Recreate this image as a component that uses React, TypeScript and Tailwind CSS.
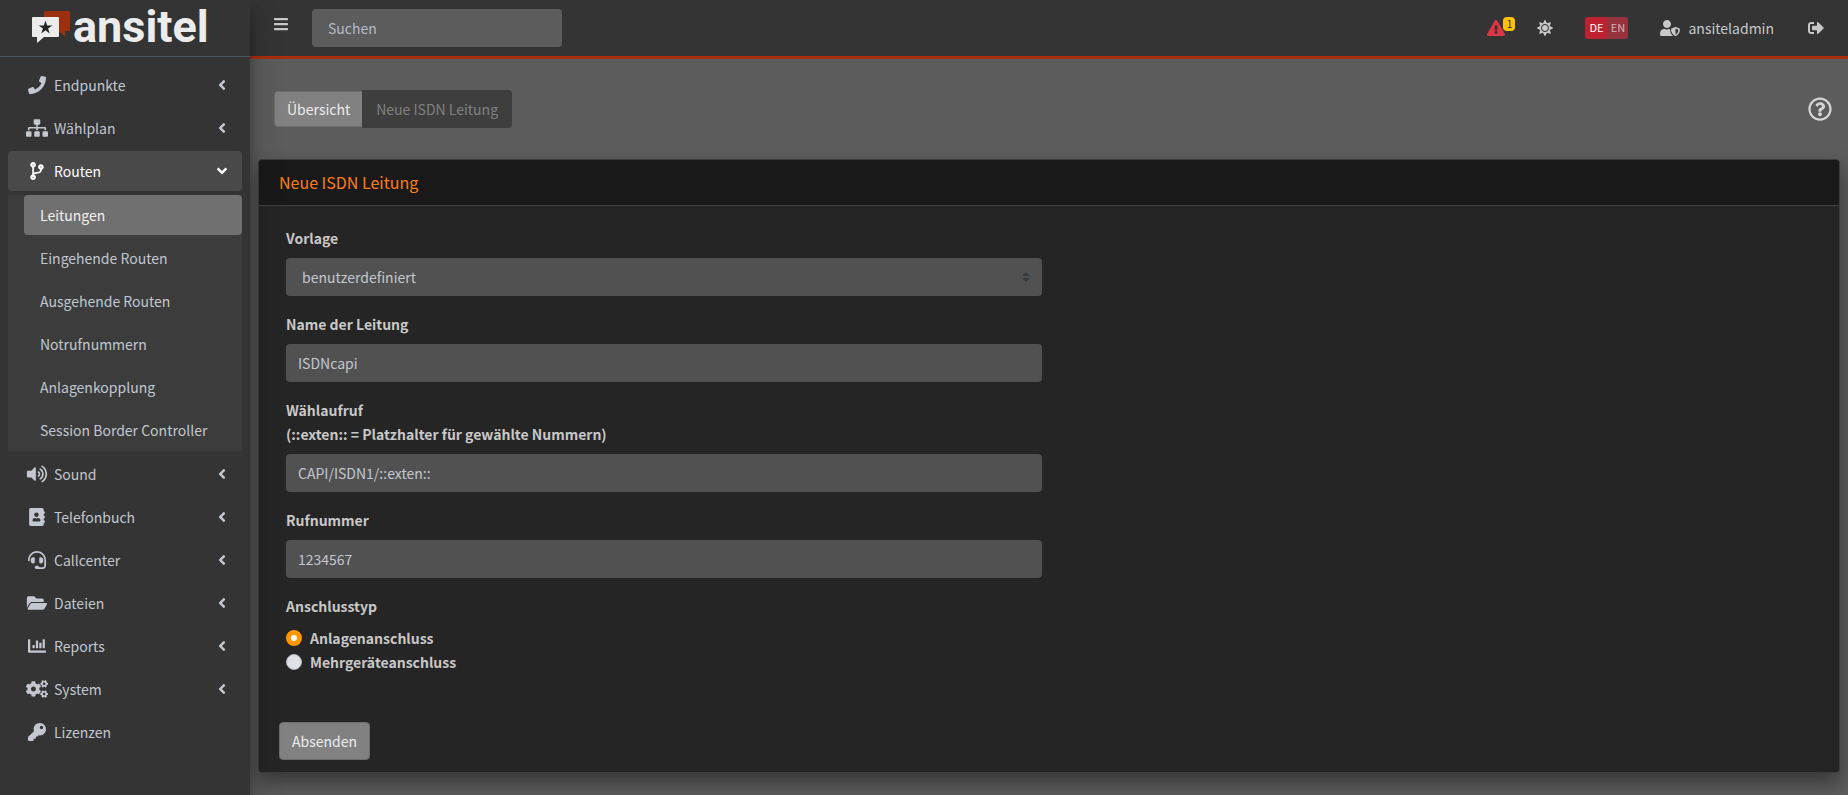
import { useState } from 'react';
import type { IconType } from 'react-icons';
import {
  FaAddressBook,
  FaAngleDown,
  FaAngleLeft,
  FaBars,
  FaChartBar,
  FaCodeBranch,
  FaCogs,
  FaExclamationTriangle,
  FaFolderOpen,
  FaHeadset,
  FaKey,
  FaPhone,
  FaRegQuestionCircle,
  FaSignOutAlt,
  FaSitemap,
  FaSun,
  FaUserShield,
  FaVolumeUp,
} from 'react-icons/fa';

interface NavEntry {
  label: string;
  icon: IconType;
  leaf?: boolean;
  children?: string[];
}

const NAV: NavEntry[] = [
  { label: 'Endpunkte', icon: FaPhone },
  { label: 'Wählplan', icon: FaSitemap },
  {
    label: 'Routen',
    icon: FaCodeBranch,
    children: [
      'Leitungen',
      'Eingehende Routen',
      'Ausgehende Routen',
      'Notrufnummern',
      'Anlagenkopplung',
      'Session Border Controller',
    ],
  },
  { label: 'Sound', icon: FaVolumeUp },
  { label: 'Telefonbuch', icon: FaAddressBook },
  { label: 'Callcenter', icon: FaHeadset },
  { label: 'Dateien', icon: FaFolderOpen },
  { label: 'Reports', icon: FaChartBar },
  { label: 'System', icon: FaCogs },
  { label: 'Lizenzen', icon: FaKey, leaf: true },
];

const fieldClass =
  'block h-[38px] w-full rounded bg-[#515151] px-3 text-[#c2c7d0] focus:outline-none focus:ring-1 focus:ring-orange-500';

function Logo() {
  return (
    <a href="#" className="flex h-[57px] items-center gap-[3px] border-b border-[#4b545c] pb-[3px] pl-8 text-[#ececec]">
      <svg viewBox="0 0 38 32" className="h-8 w-[38px] shrink-0" aria-hidden="true">
        <path d="M13 0h24a1 1 0 0 1 1 1v18a1 1 0 0 1-1 1h-4v6l-6-6H13a1 1 0 0 1-1-1V1a1 1 0 0 1 1-1z" fill="#9c2f0e" />
        <path d="M1 6h25a1 1 0 0 1 1 1v18a1 1 0 0 1-1 1H12l-7 6v-6H1a1 1 0 0 1-1-1V7a1 1 0 0 1 1-1z" fill="#ececec" />
        <path
          d="M13.5 9.5l1.6 4.9h5.2l-4.2 3 1.6 5-4.2-3.1-4.2 3.1 1.6-5-4.2-3h5.2z"
          fill="#222"
        />
      </svg>
      <span className="font-[Roboto,sans-serif] text-[45px] leading-[53px] font-bold">ansitel</span>
    </a>
  );
}

function NavItem({ entry }: { entry: NavEntry }) {
  const [open, setOpen] = useState(Boolean(entry.children));
  const Icon = entry.icon;
  const Arrow = open ? FaAngleDown : FaAngleLeft;

  return (
    <li>
      <button
        type="button"
        onClick={() => entry.children && setOpen(!open)}
        className={`flex h-10 w-full items-center rounded pr-3 pl-4 text-left ${
          entry.children ? 'bg-[#494949] text-white' : 'text-[#c2c7d0]'
        }`}
      >
        <span className="flex w-[26px] shrink-0 justify-center">
          <Icon className="h-[18px] w-[22px]" />
        </span>
        <span className="ml-1 flex-1">{entry.label}</span>
        {!entry.leaf && <Arrow className="size-4" />}
      </button>
      {entry.children && open && (
        <ul className="mt-1 flex flex-col gap-[3px] bg-[#3c3c3c] pb-px pl-4">
          {entry.children.map((child, i) => (
            <li key={child}>
              <a
                href="#"
                className={`flex h-10 items-center rounded px-4 whitespace-nowrap ${
                  i === 0 ? 'bg-[#707070] text-[#f1f1f1]' : 'text-[#c2c7d0]'
                }`}
              >
                {child}
              </a>
            </li>
          ))}
        </ul>
      )}
    </li>
  );
}

function Sidebar() {
  return (
    <aside className="z-10 w-[250px] shrink-0 bg-[#343434] shadow-[0_14px_28px_rgba(0,0,0,0.25),0_10px_10px_rgba(0,0,0,0.22)]">
      <Logo />
      <nav className="px-2 pt-2">
        <ul className="flex flex-col gap-[3px]">
          {NAV.map((entry) => (
            <NavItem key={entry.label} entry={entry} />
          ))}
        </ul>
      </nav>
    </aside>
  );
}

function Topbar() {
  return (
    <header className="flex h-[59px] items-center border-b-[3px] border-[#a92f0c] bg-[#343434] px-6 text-[#c8c8c8]">
      <button type="button" aria-label="Menü" className="mb-2">
        <FaBars className="h-4 w-[14px]" />
      </button>
      <input
        type="search"
        aria-label="Suchen"
        placeholder="Suchen"
        className="ml-6 h-[38px] w-[250px] rounded bg-[#5c5c5c] px-4 text-[#c2c7d0] placeholder:text-[#b4b9c2] focus:outline-none"
      />
      <div className="ml-auto flex items-center">
        <a href="#" aria-label="Warnungen" className="relative mr-8">
          <FaExclamationTriangle className="h-4 w-[18px] text-[#dc3545]" />
          <span className="absolute -top-[3px] left-4 flex h-[14px] w-3 items-center justify-center rounded bg-[#ffc107] text-[10px] leading-none text-[#1f2d3d]">
            1
          </span>
        </a>
        <button type="button" aria-label="Helligkeit">
          <FaSun className="size-4" />
        </button>
        <div className="ml-8 flex h-[22px] overflow-hidden rounded-[3px] text-[11px] leading-4">
          <button type="button" className="w-[22px] bg-[#bd2130] pb-0.5 text-white">
            DE
          </button>
          <button type="button" className="w-[21px] bg-[#96323e] pb-0.5 text-[#d0b4b8]">
            EN
          </button>
        </div>
        <a href="#" className="ml-8 flex items-center gap-2">
          <FaUserShield className="h-4 w-5" />
          ansiteladmin
        </a>
        <a href="#" aria-label="Abmelden" className="ml-[34px]">
          <FaSignOutAlt className="size-4" />
        </a>
      </div>
    </header>
  );
}

function TrunkForm() {
  const [type, setType] = useState('anlage');

  return (
    <form
      onSubmit={(e) => e.preventDefault()}
      className="rounded border border-[#3c3c3c] bg-[#252525] text-[#c8c8c8] shadow-[0_10px_20px_rgba(0,0,0,0.4)]"
    >
      <div className="flex h-[46px] items-center rounded-t border-b border-[#3f4043] bg-[#191919] px-5 pb-0.5">
        <h1 className="text-base text-[#fd7e14]">Neue ISDN Leitung</h1>
      </div>
      <div className="flex w-1/2 flex-col gap-4 py-5 pr-[7px] pl-[27px]">
        <div>
          <label htmlFor="template" className="mb-2 block leading-6 font-bold">
            Vorlage
          </label>
          <div className="relative">
            <select id="template" className={`${fieldClass} appearance-none indent-1`}>
              <option>benutzerdefiniert</option>
            </select>
            <svg
              viewBox="0 0 4 5"
              className="pointer-events-none absolute top-[14px] right-3 h-[10px] w-2"
              aria-hidden="true"
            >
              <path fill="#343a40" d="M2 0L0 2h4zm0 5L0 3h4z" />
            </svg>
          </div>
        </div>
        <div>
          <label htmlFor="name" className="mb-2 block leading-6 font-bold">
            Name der Leitung
          </label>
          <input id="name" type="text" defaultValue="ISDNcapi" className={fieldClass} />
        </div>
        <div>
          <label htmlFor="dial" className="mb-2 block leading-6 font-bold">
            Wählaufruf
            <br />
            (::exten:: = Platzhalter für gewählte Nummern)
          </label>
          <input id="dial" type="text" defaultValue="CAPI/ISDN1/::exten::" className={fieldClass} />
        </div>
        <div>
          <label htmlFor="number" className="mb-2 block leading-6 font-bold">
            Rufnummer
          </label>
          <input id="number" type="text" defaultValue="1234567" className={fieldClass} />
        </div>
        <fieldset className="mb-4 leading-6 font-bold">
          <legend className="mb-2">Anschlusstyp</legend>
          {[
            { id: 'anlage', label: 'Anlagenanschluss' },
            { id: 'mehrgeraete', label: 'Mehrgeräteanschluss' },
          ].map((option) => (
            <label key={option.id} className="flex items-center gap-2">
              <input
                type="radio"
                name="type"
                checked={type === option.id}
                onChange={() => setType(option.id)}
                className="size-4 appearance-none rounded-full border border-[#adb5bd] bg-[#dee2e6] checked:border-[5px] checked:border-[#ff9800] checked:bg-white"
              />
              {option.label}
            </label>
          ))}
        </fieldset>
      </div>
      <div className="px-5 py-3">
        <button type="submit" className="h-[38px] rounded border border-[#6c6c6c] bg-[#818181] px-3 text-[#ececec]">
          Absenden
        </button>
      </div>
    </form>
  );
}

export default function App() {
  return (
    <div className="flex min-h-screen bg-[#5c5c5c] font-['Noto_Sans_CJK_JP','Noto_Sans',sans-serif] text-[14px] leading-6">
      <Sidebar />
      <div className="flex min-w-0 flex-1 flex-col">
        <Topbar />
        <main className="px-2 pb-6">
          <div className="flex h-[100px] items-center justify-between pt-[31px] pr-2 pb-8 pl-4">
            <div className="flex items-center">
              <a
                href="#"
                className="flex h-9 items-center rounded-l border border-r-0 border-[#6c6c6c] bg-[#818181] px-3 text-[#ececec]"
              >
                Übersicht
              </a>
              <button type="button" disabled className="h-[38px] rounded-r bg-[#3e3e3e] px-3.5 text-[#808080]">
                Neue ISDN Leitung
              </button>
            </div>
            <a href="#" aria-label="Hilfe" className="text-[#d6d6d6]">
              <FaRegQuestionCircle className="size-6" />
            </a>
          </div>
          <TrunkForm />
        </main>
      </div>
    </div>
  );
}
